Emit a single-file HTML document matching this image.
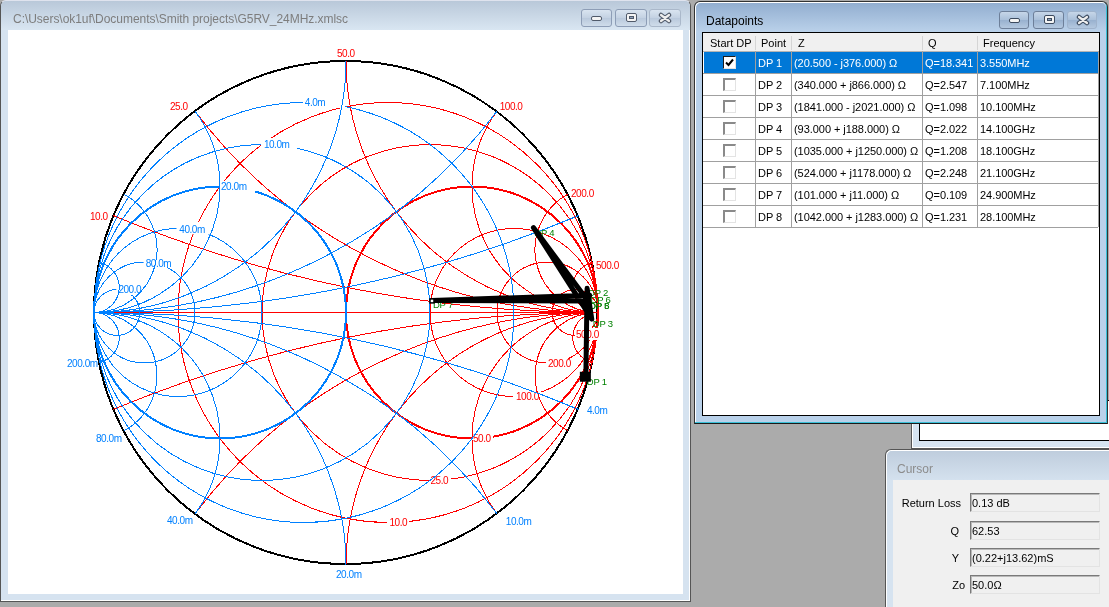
<!DOCTYPE html><html><head><meta charset="utf-8"><style>
*{margin:0;padding:0;box-sizing:border-box}
body{width:1109px;height:607px;overflow:hidden;position:relative;background:#ababab;font-family:"Liberation Sans",sans-serif}
.abs{position:absolute}
.t{will-change:transform}
</style></head><body><div class="abs" style="left:0;top:0;width:691px;height:602px;background:#d6e3f0;border:1px solid #555;border-top-color:#dfe3ee;border-radius:6px 6px 0 0;box-shadow:inset -1px -1px #fff"></div>
<div class="abs" style="left:1px;top:1px;width:689px;height:29px;background:linear-gradient(#b9c8d9,#d9e6f2);border-radius:5px 5px 0 0"></div>
<div class="abs t" style="left:12.5px;top:12px;font-size:12px;color:#7d7d7d;white-space:nowrap;letter-spacing:-0.04px">C:\Users\ok1uf\Documents\Smith projects\G5RV_24MHz.xmlsc</div>
<div class="abs" style="left:581px;top:9px;width:31px;height:18px;border:1px solid #8d9db6;border-radius:3px;background:linear-gradient(#d9e4f0,#c3d1e2 50%,#b9c9dc 51%,#cfdcea)"></div>
<div class="abs" style="left:615px;top:9px;width:32px;height:18px;border:1px solid #8d9db6;border-radius:3px;background:linear-gradient(#d9e4f0,#c3d1e2 50%,#b9c9dc 51%,#cfdcea)"></div>
<div class="abs" style="left:649px;top:9px;width:32px;height:18px;border:1px solid #aab8ca;border-radius:3px;background:linear-gradient(#d9e4f0,#c3d1e2 50%,#b9c9dc 51%,#cfdcea)"></div>
<div class="abs" style="left:590.5px;top:16px;width:11px;height:5px;background:#f4f4f4;border:1px solid #505a6a;border-radius:2px"></div>
<div class="abs" style="left:626px;top:12.5px;width:11px;height:9px;background:#f4f4f4;border:1px solid #505a6a;border-radius:2px"></div>
<div class="abs" style="left:629px;top:15.5px;width:5px;height:3px;background:#8fa3bd;border:1px solid #505a6a"></div>
<svg class="abs" style="left:658px;top:12px" width="14" height="12"><path d="M3 3 L11 9 M11 3 L3 9" stroke="#505a6a" stroke-width="4.5" stroke-linecap="round"/><path d="M3 3 L11 9 M11 3 L3 9" stroke="#eee" stroke-width="2.2" stroke-linecap="round"/></svg>
<div class="abs" style="left:8px;top:30px;width:675px;height:564px;background:#fff"></div>
<svg width="1109" height="607" style="position:absolute;left:0;top:0">
<g shape-rendering="crispEdges">
<circle cx="345.5" cy="312.5" r="251.5" stroke="#000" stroke-width="2" fill="none"/>
<circle cx="388" cy="312.5" r="210" stroke="#ff0000" stroke-width="1" fill="none"/>
<circle cx="430" cy="312.5" r="168" stroke="#ff0000" stroke-width="1" fill="none"/>
<circle cx="472" cy="312.5" r="126" stroke="#ff0000" stroke-width="2" fill="none"/>
<circle cx="514" cy="312.5" r="84" stroke="#ff0000" stroke-width="1" fill="none"/>
<circle cx="547.6" cy="312.5" r="50.4" stroke="#ff0000" stroke-width="1" fill="none"/>
<circle cx="575.09" cy="312.5" r="22.91" stroke="#ff0000" stroke-width="1" fill="none"/>
</g>
<g font-family='Liberation Sans' font-size="10px" letter-spacing="-0.45">
<rect x="387" y="516" width="22" height="13" fill="#fff"/><text x="389.5" y="526" fill="#ff0000">10.0</text>
<rect x="429" y="474" width="22" height="13" fill="#fff"/><text x="430.5" y="484" fill="#ff0000">25.0</text>
<rect x="472.5" y="432" width="20.5" height="13" fill="#fff"/><text x="473" y="442" fill="#ff0000">50.0</text>
<rect x="513" y="390" width="28" height="13" fill="#fff"/><text x="516" y="400" fill="#ff0000">100.0</text>
<rect x="546" y="356" width="22" height="13" fill="#fff"/><text x="548" y="366.5" fill="#ff0000">200.0</text>
<rect x="575" y="328" width="25" height="12" fill="#fff"/><text x="576" y="338.3" fill="#ff0000">500.0</text>
</g>
<g shape-rendering="crispEdges">
<path d="M113.38 215.58 A1260 1260 0 0 0 598 312.5" stroke="#ff0000" stroke-width="1" fill="none"/>
<path d="M113.38 409.42 A1260 1260 0 0 1 598 312.5" stroke="#ff0000" stroke-width="1" fill="none"/>
<path d="M194.8 110.9 A504 504 0 0 0 598 312.5" stroke="#ff0000" stroke-width="1" fill="none"/>
<path d="M194.8 514.1 A504 504 0 0 1 598 312.5" stroke="#ff0000" stroke-width="1" fill="none"/>
<path d="M346 60.5 A252 252 0 0 0 598 312.5" stroke="#ff0000" stroke-width="1" fill="none"/>
<path d="M346 564.5 A252 252 0 0 1 598 312.5" stroke="#ff0000" stroke-width="1" fill="none"/>
<path d="M497.2 110.9 A126 126 0 0 0 598 312.5" stroke="#ff0000" stroke-width="1" fill="none"/>
<path d="M497.2 514.1 A126 126 0 0 1 598 312.5" stroke="#ff0000" stroke-width="1" fill="none"/>
<path d="M568.35 193.91 A63 63 0 0 0 598 312.5" stroke="#ff0000" stroke-width="1" fill="none"/>
<path d="M568.35 431.09 A63 63 0 0 1 598 312.5" stroke="#ff0000" stroke-width="1" fill="none"/>
<path d="M593.01 262.6 A25.2 25.2 0 0 0 598 312.5" stroke="#ff0000" stroke-width="1" fill="none"/>
<path d="M593.01 362.4 A25.2 25.2 0 0 1 598 312.5" stroke="#ff0000" stroke-width="1" fill="none"/>
<line x1="94.0" y1="312.5" x2="598.0" y2="312.5" stroke="#ff0000" stroke-width="1"/>
</g>
<g shape-rendering="crispEdges">
<circle cx="304" cy="312.5" r="210" stroke="#0080ff" stroke-width="1" fill="none"/>
<circle cx="262" cy="312.5" r="168" stroke="#0080ff" stroke-width="1" fill="none"/>
<circle cx="220" cy="312.5" r="126" stroke="#0080ff" stroke-width="2" fill="none"/>
<circle cx="178" cy="312.5" r="84" stroke="#0080ff" stroke-width="1" fill="none"/>
<circle cx="144.4" cy="312.5" r="50.4" stroke="#0080ff" stroke-width="1" fill="none"/>
<circle cx="116.91" cy="312.5" r="22.91" stroke="#0080ff" stroke-width="1" fill="none"/>
</g>
<g font-family='Liberation Sans' font-size="10px" letter-spacing="-0.45">
<rect x="303" y="96" width="42" height="12" fill="#fff"/><text x="304.8" y="106" fill="#0080ff">4.0m</text>
<rect x="261" y="138" width="36" height="13" fill="#fff"/><text x="263.9" y="148" fill="#0080ff">10.0m</text>
<rect x="220" y="181" width="35" height="12" fill="#fff"/><text x="221" y="190" fill="#0080ff">20.0m</text>
<rect x="176.5" y="222" width="33.5" height="12.5" fill="#fff"/><text x="179.3" y="233" fill="#0080ff">40.0m</text>
<rect x="143.6" y="257" width="23.400000000000006" height="11" fill="#fff"/><text x="145.7" y="267" fill="#0080ff">80.0m</text>
<rect x="116.3" y="283" width="25.700000000000003" height="12" fill="#fff"/><text x="118.4" y="293.4" fill="#0080ff">200.0</text>
</g>
<g shape-rendering="crispEdges">
<path d="M578.62 409.42 A1260 1260 0 0 0 94 312.5" stroke="#0080ff" stroke-width="1" fill="none"/>
<path d="M578.62 215.58 A1260 1260 0 0 1 94 312.5" stroke="#0080ff" stroke-width="1" fill="none"/>
<path d="M497.2 514.1 A504 504 0 0 0 94 312.5" stroke="#0080ff" stroke-width="1" fill="none"/>
<path d="M497.2 110.9 A504 504 0 0 1 94 312.5" stroke="#0080ff" stroke-width="1" fill="none"/>
<path d="M346 564.5 A252 252 0 0 0 94 312.5" stroke="#0080ff" stroke-width="1" fill="none"/>
<path d="M346 60.5 A252 252 0 0 1 94 312.5" stroke="#0080ff" stroke-width="1" fill="none"/>
<path d="M194.8 514.1 A126 126 0 0 0 94 312.5" stroke="#0080ff" stroke-width="1" fill="none"/>
<path d="M194.8 110.9 A126 126 0 0 1 94 312.5" stroke="#0080ff" stroke-width="1" fill="none"/>
<path d="M123.65 431.09 A63 63 0 0 0 94 312.5" stroke="#0080ff" stroke-width="1" fill="none"/>
<path d="M123.65 193.91 A63 63 0 0 1 94 312.5" stroke="#0080ff" stroke-width="1" fill="none"/>
<path d="M98.99 362.4 A25.2 25.2 0 0 0 94 312.5" stroke="#0080ff" stroke-width="1" fill="none"/>
<path d="M98.99 262.6 A25.2 25.2 0 0 1 94 312.5" stroke="#0080ff" stroke-width="1" fill="none"/>
<rect x="114" y="312" width="25" height="1" fill="#ff0000"/>
<rect x="114" y="311" width="12" height="1" fill="#0080ff"/><rect x="114" y="313" width="12" height="1" fill="#0080ff"/>
</g>
<g font-family='Liberation Sans' font-size="10px" letter-spacing="-0.45">
<text x="337" y="57.3" fill="#ff0000">50.0</text>
<text x="170" y="110" fill="#ff0000">25.0</text>
<text x="499.7" y="110" fill="#ff0000">100.0</text>
<text x="90" y="220" fill="#ff0000">10.0</text>
<text x="571" y="197" fill="#ff0000">200.0</text>
<text x="596" y="269" fill="#ff0000">500.0</text>
<text x="67" y="366.7" fill="#0080ff">200.0m</text>
<text x="96" y="441.5" fill="#0080ff">80.0m</text>
<text x="167" y="524.2" fill="#0080ff">40.0m</text>
<text x="336" y="578.1" fill="#0080ff">20.0m</text>
<text x="505.8" y="525.1" fill="#0080ff">10.0m</text>
<text x="586.9" y="413.9" fill="#0080ff">4.0m</text>
</g>
<g font-family='Liberation Sans' font-size="9.5px" letter-spacing="-0.25" fill="#008000">
<text x="586.86" y="385.25">DP 1</text>
<text x="588.1" y="296.31">DP 2</text>
<text x="592.78" y="327.15">DP 3</text>
<text x="534.41" y="235.59">DP 4</text>
<text x="589.02" y="309">DP 5</text>
<text x="590.58" y="303.21">DP 6</text>
<text x="432.99" y="308.41">DP 7</text>
<text x="589.31" y="309.11">DP 8</text>
</g>
<path d="M585.86 377.25 L587.1 288.31 L591.78 319.15 L533.41 227.59 L588.02 301 L589.58 295.21 L431.99 300.41 L588.31 301.11" stroke="#000" stroke-width="5" fill="none" stroke-linecap="round" stroke-linejoin="round"/>
<rect x="429.99" y="298.91" width="4" height="4" fill="#fff" stroke="#000" stroke-width="1.5"/>
<rect x="579.86" y="371.75" width="11" height="10" fill="#000"/>
</svg>
<div class="abs" style="left:911px;top:400px;width:198px;height:49px;background:#d6e3f0;border:1px solid #555;border-right:none;box-shadow:inset 1px -1px #fff"></div>
<div class="abs" style="left:919px;top:400px;width:190px;height:41px;background:#fff;border:1px solid #000;border-right:none"></div><div class="abs" style="left:885px;top:449px;width:224px;height:158px;background:#d6e3f0;border:1px solid #555;border-right:none;border-bottom:none;border-radius:6px 0 0 0;box-shadow:inset 1px 1px #fff"></div>
<div class="abs" style="left:887px;top:451px;width:222px;height:29px;background:linear-gradient(#bfcddd,#d4e1ee);border-radius:5px 0 0 0"></div>
<div class="abs t" style="left:897px;top:462px;font-size:12px;color:#8c8c8c">Cursor</div>
<div class="abs" style="left:893px;top:480px;width:216px;height:127px;background:#f0f0f0"></div>
<div class="abs t" style="left:860.5px;top:497px;width:100px;text-align:right;font-size:11px;color:#000;white-space:nowrap">Return Loss</div>
<div class="abs" style="left:970px;top:493px;width:130px;height:19px;background:#f0f0f0;border:1px solid #e3e3e3;border-top-color:#7a7a7a;border-left-color:#7a7a7a;box-shadow:inset 1px 1px #b9b9b9"></div>
<div class="abs t" style="left:972px;top:497px;font-size:11px;color:#000;white-space:nowrap">0.13 dB</div>
<div class="abs t" style="left:858.5px;top:525px;width:100px;text-align:right;font-size:11px;color:#000;white-space:nowrap">Q</div>
<div class="abs" style="left:970px;top:521px;width:130px;height:19px;background:#f0f0f0;border:1px solid #e3e3e3;border-top-color:#7a7a7a;border-left-color:#7a7a7a;box-shadow:inset 1px 1px #b9b9b9"></div>
<div class="abs t" style="left:972px;top:525px;font-size:11px;color:#000;white-space:nowrap">62.53</div>
<div class="abs t" style="left:859px;top:552px;width:100px;text-align:right;font-size:11px;color:#000;white-space:nowrap">Y</div>
<div class="abs" style="left:970px;top:548px;width:130px;height:19px;background:#f0f0f0;border:1px solid #e3e3e3;border-top-color:#7a7a7a;border-left-color:#7a7a7a;box-shadow:inset 1px 1px #b9b9b9"></div>
<div class="abs t" style="left:972px;top:552px;font-size:11px;color:#000;white-space:nowrap">(0.22+j13.62)mS</div>
<div class="abs t" style="left:864.5px;top:579px;width:100px;text-align:right;font-size:11px;color:#000;white-space:nowrap">Zo</div>
<div class="abs" style="left:970px;top:575px;width:130px;height:19px;background:#f0f0f0;border:1px solid #e3e3e3;border-top-color:#7a7a7a;border-left-color:#7a7a7a;box-shadow:inset 1px 1px #b9b9b9"></div>
<div class="abs t" style="left:972px;top:579px;font-size:11px;color:#000;white-space:nowrap">50.0&#937;</div>
<div class="abs" style="left:694px;top:1px;width:414px;height:423px;background:#b9d1ea;border:1px solid #333;border-radius:6px 6px 0 0;border-bottom:1px solid #1a1a1a;box-shadow:inset -1px -1px #39c0d8,inset 1px 1px #fff"></div>
<div class="abs" style="left:696px;top:3px;width:410px;height:28px;background:linear-gradient(#92aed0,#b9d0e9);border-radius:5px 5px 0 0"></div>
<div class="abs t" style="left:706px;top:14px;font-size:12px;color:#000">Datapoints</div>
<div class="abs" style="left:999px;top:11px;width:30px;height:18px;border:1px solid #6d7f99;border-radius:3px;background:linear-gradient(#c6d6e8,#a9bfd9 50%,#98b1cf 51%,#b4c8df)"></div>
<div class="abs" style="left:1033px;top:11px;width:31px;height:18px;border:1px solid #6d7f99;border-radius:3px;background:linear-gradient(#c6d6e8,#a9bfd9 50%,#98b1cf 51%,#b4c8df)"></div>
<div class="abs" style="left:1067px;top:11px;width:30px;height:18px;border:1px solid #9fb3cc;border-radius:3px;background:linear-gradient(#c6d6e8,#a9bfd9 50%,#98b1cf 51%,#b4c8df)"></div>
<div class="abs" style="left:1008.5px;top:18px;width:11px;height:5px;background:#f4f4f4;border:1px solid #3c4a5e;border-radius:2px"></div>
<div class="abs" style="left:1044px;top:14.5px;width:11px;height:9px;background:#f4f4f4;border:1px solid #3c4a5e;border-radius:2px"></div>
<div class="abs" style="left:1047px;top:17.5px;width:5px;height:3px;background:#8fa3bd;border:1px solid #3c4a5e"></div>
<svg class="abs" style="left:1076px;top:14px" width="14" height="12"><path d="M3 3 L11 9 M11 3 L3 9" stroke="#3c4a5e" stroke-width="4.5" stroke-linecap="round"/><path d="M3 3 L11 9 M11 3 L3 9" stroke="#eee" stroke-width="2.2" stroke-linecap="round"/></svg>
<div class="abs" style="left:702px;top:32px;width:398px;height:384px;background:#fff;border:1px solid #000"></div>
<div class="abs" style="left:703px;top:33px;width:396px;height:18px;background:#f0f0f0"></div>
<div class="abs t" style="left:710px;top:37px;font-size:11px;color:#000;white-space:nowrap">Start DP</div>
<div class="abs t" style="left:761px;top:37px;font-size:11px;color:#000;white-space:nowrap">Point</div>
<div class="abs t" style="left:798px;top:37px;font-size:11px;color:#000;white-space:nowrap">Z</div>
<div class="abs t" style="left:928px;top:37px;font-size:11px;color:#000;white-space:nowrap">Q</div>
<div class="abs t" style="left:983px;top:37px;font-size:11px;color:#000;white-space:nowrap">Frequency</div>
<div class="abs" style="left:703px;top:51px;width:395px;height:1px;background:#b4b4b4"></div>
<div class="abs" style="left:755px;top:36px;width:1px;height:14px;background:#d5d5d5"></div>
<div class="abs" style="left:791px;top:36px;width:1px;height:14px;background:#d5d5d5"></div>
<div class="abs" style="left:922px;top:36px;width:1px;height:14px;background:#d5d5d5"></div>
<div class="abs" style="left:977px;top:36px;width:1px;height:14px;background:#d5d5d5"></div>
<div class="abs" style="left:704px;top:52px;width:394px;height:21px;background:#0078d7"></div>
<div class="abs" style="left:703px;top:73px;width:395px;height:1px;background:#a0a0a0"></div>
<div class="abs" style="left:755px;top:51px;width:1px;height:22px;background:#a0a0a0"></div>
<div class="abs" style="left:791px;top:51px;width:1px;height:22px;background:#a0a0a0"></div>
<div class="abs" style="left:922px;top:51px;width:1px;height:22px;background:#a0a0a0"></div>
<div class="abs" style="left:977px;top:51px;width:1px;height:22px;background:#a0a0a0"></div>
<div class="abs" style="left:1098px;top:51px;width:1px;height:22px;background:#a0a0a0"></div>
<div class="abs" style="left:723px;top:56px;width:13px;height:13px;background:#fff;border:1px solid #1c1c1c;border-right-color:#e3e3e3;border-bottom-color:#e3e3e3"></div>
<svg class="abs" style="left:723px;top:56px" width="13" height="13"><path d="M3 6.5 L5.5 9 L10 3.5" stroke="#000" stroke-width="2" fill="none"/></svg>
<div class="abs t" style="left:758px;top:57px;font-size:11px;color:#fff;white-space:nowrap;letter-spacing:-0.05px">DP 1</div>
<div class="abs t" style="left:794px;top:57px;font-size:11px;color:#fff;white-space:nowrap;letter-spacing:-0.05px">(20.500 - j376.000) &#937;</div>
<div class="abs t" style="left:925px;top:57px;font-size:11px;color:#fff;white-space:nowrap;letter-spacing:-0.05px">Q=18.341</div>
<div class="abs t" style="left:980px;top:57px;font-size:11px;color:#fff;white-space:nowrap;letter-spacing:-0.05px">3.550MHz</div>
<div class="abs" style="left:703px;top:95px;width:395px;height:1px;background:#a0a0a0"></div>
<div class="abs" style="left:755px;top:73px;width:1px;height:22px;background:#a0a0a0"></div>
<div class="abs" style="left:791px;top:73px;width:1px;height:22px;background:#a0a0a0"></div>
<div class="abs" style="left:922px;top:73px;width:1px;height:22px;background:#a0a0a0"></div>
<div class="abs" style="left:977px;top:73px;width:1px;height:22px;background:#a0a0a0"></div>
<div class="abs" style="left:1098px;top:73px;width:1px;height:22px;background:#a0a0a0"></div>
<div class="abs" style="left:723px;top:78px;width:13px;height:13px;background:#fff;border:1px solid #8a8a8a;border-width:2px 1px 1px 2px;border-right-color:#e3e3e3;border-bottom-color:#e3e3e3"></div>
<div class="abs t" style="left:758px;top:79px;font-size:11px;color:#000;white-space:nowrap;letter-spacing:-0.05px">DP 2</div>
<div class="abs t" style="left:794px;top:79px;font-size:11px;color:#000;white-space:nowrap;letter-spacing:-0.05px">(340.000 + j866.000) &#937;</div>
<div class="abs t" style="left:925px;top:79px;font-size:11px;color:#000;white-space:nowrap;letter-spacing:-0.05px">Q=2.547</div>
<div class="abs t" style="left:980px;top:79px;font-size:11px;color:#000;white-space:nowrap;letter-spacing:-0.05px">7.100MHz</div>
<div class="abs" style="left:703px;top:117px;width:395px;height:1px;background:#a0a0a0"></div>
<div class="abs" style="left:755px;top:95px;width:1px;height:22px;background:#a0a0a0"></div>
<div class="abs" style="left:791px;top:95px;width:1px;height:22px;background:#a0a0a0"></div>
<div class="abs" style="left:922px;top:95px;width:1px;height:22px;background:#a0a0a0"></div>
<div class="abs" style="left:977px;top:95px;width:1px;height:22px;background:#a0a0a0"></div>
<div class="abs" style="left:1098px;top:95px;width:1px;height:22px;background:#a0a0a0"></div>
<div class="abs" style="left:723px;top:100px;width:13px;height:13px;background:#fff;border:1px solid #8a8a8a;border-width:2px 1px 1px 2px;border-right-color:#e3e3e3;border-bottom-color:#e3e3e3"></div>
<div class="abs t" style="left:758px;top:101px;font-size:11px;color:#000;white-space:nowrap;letter-spacing:-0.05px">DP 3</div>
<div class="abs t" style="left:794px;top:101px;font-size:11px;color:#000;white-space:nowrap;letter-spacing:-0.05px">(1841.000 - j2021.000) &#937;</div>
<div class="abs t" style="left:925px;top:101px;font-size:11px;color:#000;white-space:nowrap;letter-spacing:-0.05px">Q=1.098</div>
<div class="abs t" style="left:980px;top:101px;font-size:11px;color:#000;white-space:nowrap;letter-spacing:-0.05px">10.100MHz</div>
<div class="abs" style="left:703px;top:139px;width:395px;height:1px;background:#a0a0a0"></div>
<div class="abs" style="left:755px;top:117px;width:1px;height:22px;background:#a0a0a0"></div>
<div class="abs" style="left:791px;top:117px;width:1px;height:22px;background:#a0a0a0"></div>
<div class="abs" style="left:922px;top:117px;width:1px;height:22px;background:#a0a0a0"></div>
<div class="abs" style="left:977px;top:117px;width:1px;height:22px;background:#a0a0a0"></div>
<div class="abs" style="left:1098px;top:117px;width:1px;height:22px;background:#a0a0a0"></div>
<div class="abs" style="left:723px;top:122px;width:13px;height:13px;background:#fff;border:1px solid #8a8a8a;border-width:2px 1px 1px 2px;border-right-color:#e3e3e3;border-bottom-color:#e3e3e3"></div>
<div class="abs t" style="left:758px;top:123px;font-size:11px;color:#000;white-space:nowrap;letter-spacing:-0.05px">DP 4</div>
<div class="abs t" style="left:794px;top:123px;font-size:11px;color:#000;white-space:nowrap;letter-spacing:-0.05px">(93.000 + j188.000) &#937;</div>
<div class="abs t" style="left:925px;top:123px;font-size:11px;color:#000;white-space:nowrap;letter-spacing:-0.05px">Q=2.022</div>
<div class="abs t" style="left:980px;top:123px;font-size:11px;color:#000;white-space:nowrap;letter-spacing:-0.05px">14.100GHz</div>
<div class="abs" style="left:703px;top:161px;width:395px;height:1px;background:#a0a0a0"></div>
<div class="abs" style="left:755px;top:139px;width:1px;height:22px;background:#a0a0a0"></div>
<div class="abs" style="left:791px;top:139px;width:1px;height:22px;background:#a0a0a0"></div>
<div class="abs" style="left:922px;top:139px;width:1px;height:22px;background:#a0a0a0"></div>
<div class="abs" style="left:977px;top:139px;width:1px;height:22px;background:#a0a0a0"></div>
<div class="abs" style="left:1098px;top:139px;width:1px;height:22px;background:#a0a0a0"></div>
<div class="abs" style="left:723px;top:144px;width:13px;height:13px;background:#fff;border:1px solid #8a8a8a;border-width:2px 1px 1px 2px;border-right-color:#e3e3e3;border-bottom-color:#e3e3e3"></div>
<div class="abs t" style="left:758px;top:145px;font-size:11px;color:#000;white-space:nowrap;letter-spacing:-0.05px">DP 5</div>
<div class="abs t" style="left:794px;top:145px;font-size:11px;color:#000;white-space:nowrap;letter-spacing:-0.05px">(1035.000 + j1250.000) &#937;</div>
<div class="abs t" style="left:925px;top:145px;font-size:11px;color:#000;white-space:nowrap;letter-spacing:-0.05px">Q=1.208</div>
<div class="abs t" style="left:980px;top:145px;font-size:11px;color:#000;white-space:nowrap;letter-spacing:-0.05px">18.100GHz</div>
<div class="abs" style="left:703px;top:183px;width:395px;height:1px;background:#a0a0a0"></div>
<div class="abs" style="left:755px;top:161px;width:1px;height:22px;background:#a0a0a0"></div>
<div class="abs" style="left:791px;top:161px;width:1px;height:22px;background:#a0a0a0"></div>
<div class="abs" style="left:922px;top:161px;width:1px;height:22px;background:#a0a0a0"></div>
<div class="abs" style="left:977px;top:161px;width:1px;height:22px;background:#a0a0a0"></div>
<div class="abs" style="left:1098px;top:161px;width:1px;height:22px;background:#a0a0a0"></div>
<div class="abs" style="left:723px;top:166px;width:13px;height:13px;background:#fff;border:1px solid #8a8a8a;border-width:2px 1px 1px 2px;border-right-color:#e3e3e3;border-bottom-color:#e3e3e3"></div>
<div class="abs t" style="left:758px;top:167px;font-size:11px;color:#000;white-space:nowrap;letter-spacing:-0.05px">DP 6</div>
<div class="abs t" style="left:794px;top:167px;font-size:11px;color:#000;white-space:nowrap;letter-spacing:-0.05px">(524.000 + j1178.000) &#937;</div>
<div class="abs t" style="left:925px;top:167px;font-size:11px;color:#000;white-space:nowrap;letter-spacing:-0.05px">Q=2.248</div>
<div class="abs t" style="left:980px;top:167px;font-size:11px;color:#000;white-space:nowrap;letter-spacing:-0.05px">21.100GHz</div>
<div class="abs" style="left:703px;top:205px;width:395px;height:1px;background:#a0a0a0"></div>
<div class="abs" style="left:755px;top:183px;width:1px;height:22px;background:#a0a0a0"></div>
<div class="abs" style="left:791px;top:183px;width:1px;height:22px;background:#a0a0a0"></div>
<div class="abs" style="left:922px;top:183px;width:1px;height:22px;background:#a0a0a0"></div>
<div class="abs" style="left:977px;top:183px;width:1px;height:22px;background:#a0a0a0"></div>
<div class="abs" style="left:1098px;top:183px;width:1px;height:22px;background:#a0a0a0"></div>
<div class="abs" style="left:723px;top:188px;width:13px;height:13px;background:#fff;border:1px solid #8a8a8a;border-width:2px 1px 1px 2px;border-right-color:#e3e3e3;border-bottom-color:#e3e3e3"></div>
<div class="abs t" style="left:758px;top:189px;font-size:11px;color:#000;white-space:nowrap;letter-spacing:-0.05px">DP 7</div>
<div class="abs t" style="left:794px;top:189px;font-size:11px;color:#000;white-space:nowrap;letter-spacing:-0.05px">(101.000 + j11.000) &#937;</div>
<div class="abs t" style="left:925px;top:189px;font-size:11px;color:#000;white-space:nowrap;letter-spacing:-0.05px">Q=0.109</div>
<div class="abs t" style="left:980px;top:189px;font-size:11px;color:#000;white-space:nowrap;letter-spacing:-0.05px">24.900MHz</div>
<div class="abs" style="left:703px;top:227px;width:395px;height:1px;background:#a0a0a0"></div>
<div class="abs" style="left:755px;top:205px;width:1px;height:22px;background:#a0a0a0"></div>
<div class="abs" style="left:791px;top:205px;width:1px;height:22px;background:#a0a0a0"></div>
<div class="abs" style="left:922px;top:205px;width:1px;height:22px;background:#a0a0a0"></div>
<div class="abs" style="left:977px;top:205px;width:1px;height:22px;background:#a0a0a0"></div>
<div class="abs" style="left:1098px;top:205px;width:1px;height:22px;background:#a0a0a0"></div>
<div class="abs" style="left:723px;top:210px;width:13px;height:13px;background:#fff;border:1px solid #8a8a8a;border-width:2px 1px 1px 2px;border-right-color:#e3e3e3;border-bottom-color:#e3e3e3"></div>
<div class="abs t" style="left:758px;top:211px;font-size:11px;color:#000;white-space:nowrap;letter-spacing:-0.05px">DP 8</div>
<div class="abs t" style="left:794px;top:211px;font-size:11px;color:#000;white-space:nowrap;letter-spacing:-0.05px">(1042.000 + j1283.000) &#937;</div>
<div class="abs t" style="left:925px;top:211px;font-size:11px;color:#000;white-space:nowrap;letter-spacing:-0.05px">Q=1.231</div>
<div class="abs t" style="left:980px;top:211px;font-size:11px;color:#000;white-space:nowrap;letter-spacing:-0.05px">28.100MHz</div></body></html>
